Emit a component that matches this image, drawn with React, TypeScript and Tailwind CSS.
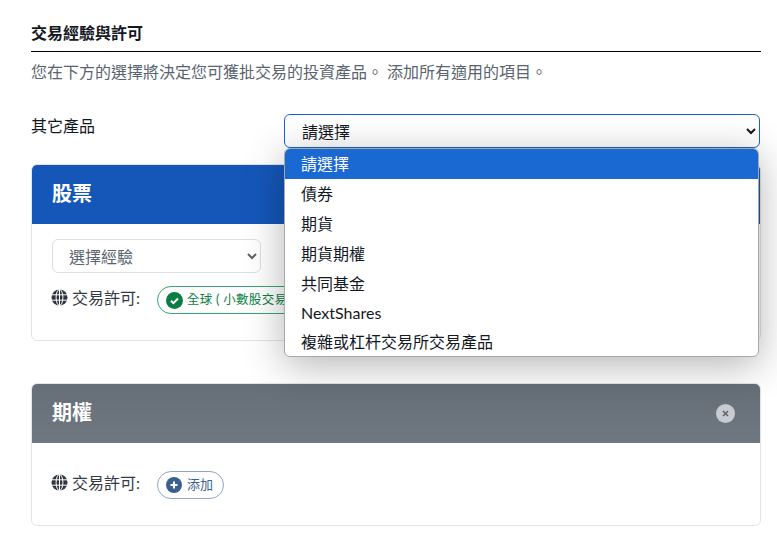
const font = "[font-family:Lato,'Noto_Sans_CJK_TC',sans-serif]";

function Globe() {
  return (
    <svg width="17" height="17" viewBox="0 0 17 17" className="shrink-0">
      <circle cx="8.5" cy="8.5" r="8" fill="#2f3540" />
      <g fill="none" stroke="#fff" strokeWidth="1">
        <ellipse cx="8.5" cy="8.5" rx="3.4" ry="8" />
        <path d="M8.5 0.5v16M1 5.8h15M1 11.2h15" />
      </g>
    </svg>
  );
}

function Permission({ children }: { children: any }) {
  return (
    <div className="-ml-[1px] flex items-center">
      <div className="flex items-center pb-[5px]">
        <Globe />
        <span className="ml-[4px] text-[16px] leading-[20px] text-[#343a45]">交易許可:</span>
      </div>
      {children}
    </div>
  );
}

export default function App() {
  return (
    <div className={`relative h-[546px] w-[777px] overflow-hidden bg-white pl-[31px] pr-[16px] pt-[22px] text-[#14181f] ${font}`}>
      <h2 className="border-b border-black pb-[7px] text-[16px] font-bold leading-[22px]">交易經驗與許可</h2>
      <p className="mt-[9px] text-[16px] leading-[22px] text-[#59646f]">
        您在下方的選擇將決定您可獲批交易的投資產品。 添加所有適用的項目。
      </p>

      <div className="mt-[31px] flex">
        <label className="w-[253px] text-[16px] leading-[22px] pt-[1px]">其它產品</label>
        <div className="relative flex-1">
          <select className="h-[34px] w-[476px] rounded-[6px] border border-[#1a63c9] bg-white pl-[13px] pr-[4px] text-[16px] text-[#14181f] outline-none">
            <option>請選擇</option>
          </select>
          <ul className="absolute left-0 top-[34px] z-10 w-[475px] overflow-hidden rounded-[6px] border border-[#a5a8ac] bg-white text-[16px] leading-[30px] text-[#14181f] shadow-[0_8px_40px_rgba(0,0,0,0.3)]">
            <li className="h-[30px] bg-[#1a68d2] pl-[16px] text-white">請選擇</li>
            <li className="h-[30px] pl-[16px]">債券</li>
            <li className="h-[30px] pl-[16px]">期貨</li>
            <li className="h-[30px] pl-[16px]">期貨期權</li>
            <li className="h-[30px] pl-[16px]">共同基金</li>
            <li className="h-[28px] pl-[16px] leading-[28px]">NextShares</li>
            <li className="h-[29px] pl-[16px]">複雜或杠杆交易所交易產品</li>
          </ul>
        </div>
      </div>

      <section className="mt-[16px] h-[177px] overflow-hidden rounded-[6px] border border-[#e2e4e7]">
        <div className="flex h-[59px] items-center bg-[#1557b9] pb-[4px] pl-[20px] text-[20px] font-bold text-white">股票</div>
        <div className="px-[20px] pt-[15px]">
          <select className="h-[34px] w-[209px] rounded-[6px] border border-[#dcdfe3] bg-white pl-[12px] text-[16px] text-[#59646f] outline-none">
            <option>選擇經驗</option>
          </select>
          <div className="mt-[13px]">
            <Permission>
              <span className="ml-[17px] flex h-[28px] w-[300px] items-center whitespace-pre rounded-full border border-[#34a870] pl-[8px] text-[12.5px] tracking-[0.3px] text-[#0a7d45]">
                <svg width="17" height="17" viewBox="0 0 17 17" className="mr-[4px] shrink-0">
                  <circle cx="8.5" cy="8.5" r="8.5" fill="#0a7d45" />
                  <path d="M5 8.8l2.4 2.4L12 6.5" fill="none" stroke="#fff" strokeWidth="2" />
                </svg>
                全球 ( 小數股交易 )
              </span>
            </Permission>
          </div>
        </div>
      </section>

      <section className="mt-[42px] h-[143px] overflow-hidden rounded-[6px] border border-[#e2e4e7]">
        <div className="flex h-[59px] items-center justify-between bg-gradient-to-b from-[#666e77] to-[#6f7780] pl-[20px] pr-[25px] text-[20px] font-bold text-white">
          <span className="pb-[4px]">期權</span>
          <span className="flex h-[19px] w-[19px] items-center justify-center rounded-full bg-[#c8cbcf]">
            <svg width="9" height="9" viewBox="0 0 9 9">
              <path d="M2 2l5 5M7 2l-5 5" stroke="#5d6670" strokeWidth="1.7" />
            </svg>
          </span>
        </div>
        <div className="px-[20px] pt-[28px]">
          <Permission>
            <span className="ml-[17px] flex h-[28px] items-center rounded-full border border-[#8fa6c4] pl-[8px] pr-[10px] text-[13px] text-[#3b5f8f]">
              <svg width="16" height="16" viewBox="0 0 16 16" className="mr-[5px] shrink-0">
                <circle cx="8" cy="8" r="8" fill="#3b5f8f" />
                <path d="M8 4.5v7M4.5 8h7" stroke="#fff" strokeWidth="2" />
              </svg>
              添加
            </span>
          </Permission>
        </div>
      </section>
    </div>
  );
}
